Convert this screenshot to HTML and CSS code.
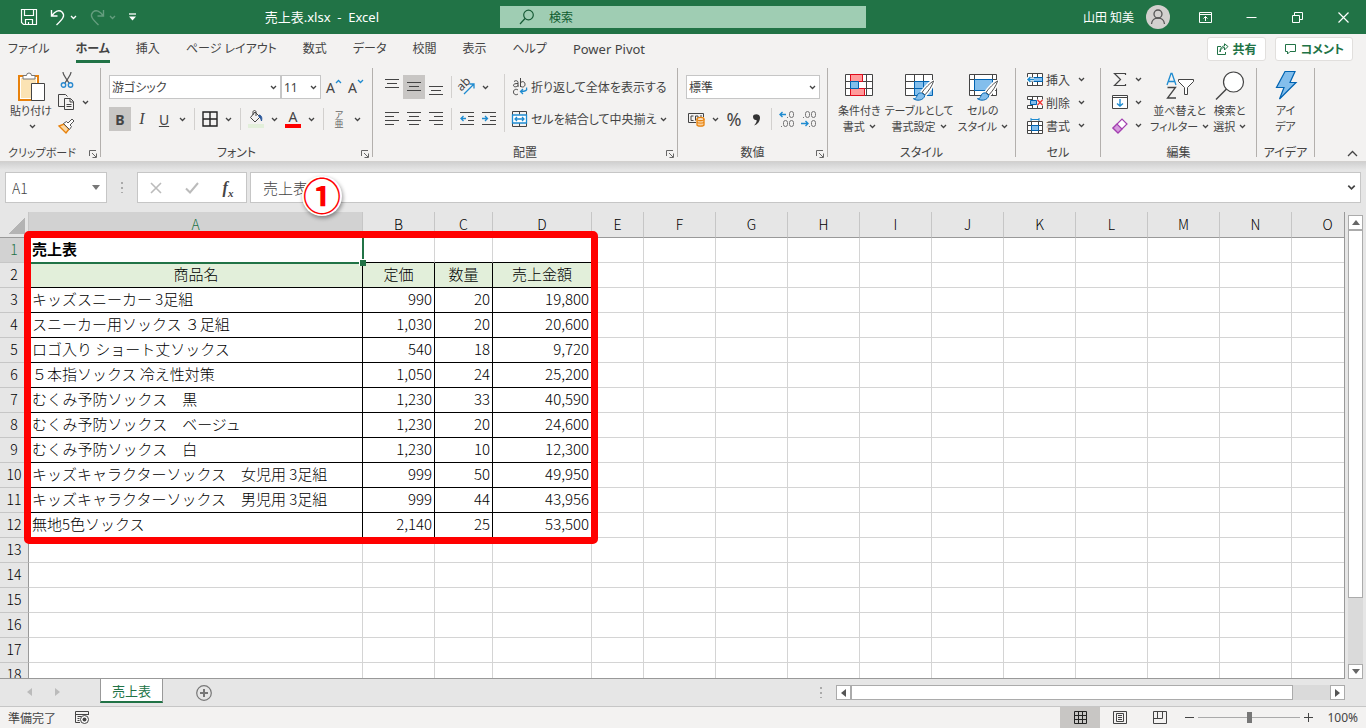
FILE: index.html
```html
<!DOCTYPE html>
<html lang="ja">
<head>
    <meta charset="UTF-8">
    <meta name="viewport" content="width=device-width, initial-scale=1.0">
    <title>売上表.xlsx - Excel</title>
    <link rel="stylesheet" href="styles.css">
</head>
<body>

    <!-- 共通アイコン -->
    <svg class="defs" width="0" height="0">
        <symbol id="chev" viewBox="0 0 7 5"><path d="M1 1l2.500 2.500L6 1" fill="none" stroke="currentColor" stroke-width="1.300"/></symbol>
        <symbol id="launcher" viewBox="0 0 8 8"><path d="M.5 6V.5H7M3 3l4 4M7.500 3.500v4h-4" fill="none" stroke="#666"/></symbol>
        <symbol id="brush" viewBox="0 0 24 24"><path d="M22.500 1c-3 1.500-9.500 8-12 12l3 2.500C17 12 21.500 5.500 22.500 1z" fill="#fff" stroke="#fff" stroke-width="4"/><path d="M22.500 1c-3 1.500-9.500 8-12 12l3 2.500C17 12 21.500 5.500 22.500 1z" fill="#fff" stroke="#444"/><path d="M10 13.500c-3-.5-4.500 1.500-5 3.500-.4 1.800-2 2.600-3.500 2.500 3 2.500 10.500 2.500 12-3.500z" fill="#83beec" stroke="#0063b1"/></symbol>
    </svg>

    <header class="titlebar">
        <div class="title-left">
            <div class="qat">
                <button aria-label="上書き保存"><svg width="18" height="18" viewBox="0 0 18 18"><path d="M1.500 1.500h15v15h-13l-2-2zM4.500 1.500v6h9v-6M5.500 16.500v-5h7v5M8.500 14v2" fill="none" stroke="#fff" stroke-width="1.200"/></svg></button>
                <button aria-label="元に戻す"><svg width="16" height="18" viewBox="0 0 16 18"><path d="M1.500 2v6h6M2 7.500C5 3 9 1.500 12 4c3.500 3.500 1 7-5.500 13" fill="none" stroke="#fff" stroke-width="1.400"/></svg><svg class="chev"><use href="#chev"/></svg></button>
                <button class="faded" aria-label="やり直し"><svg width="16" height="18" viewBox="0 0 16 18"><path d="M14.500 2v6h-6M14 7.500C11 3 7 1.500 4 4c-3.500 3.500-1 7 5.500 13" fill="none" stroke="#fff" stroke-width="1.400"/></svg><svg class="chev"><use href="#chev"/></svg></button>
                <button aria-label="カスタマイズ"><svg width="9" height="8" viewBox="0 0 9 8"><path d="M1 1h7" stroke="#fff" stroke-width="1.300"/><path d="M1 3.500h7L4.500 7.500z" fill="#fff"/></svg></button>
            </div>
            <span class="doc-title">売上表.xlsx&nbsp; -&nbsp; Excel</span>
        </div>
        <label class="search">
            <svg width="16" height="16" viewBox="0 0 16 16"><circle cx="9.500" cy="6" r="4.800" fill="none" stroke="#185c37" stroke-width="1.200"/><path d="M6 9.500L1 15" stroke="#185c37" stroke-width="1.200"/></svg>
            <input type="text" placeholder="検索" aria-label="検索">
        </label>
        <div class="title-right">
            <span class="user">山田 知美</span>
            <svg class="avatar" width="24" height="24" viewBox="0 0 24 24"><circle cx="12" cy="12" r="12" fill="#d2d0ce"/><circle cx="12" cy="9" r="4" fill="none" stroke="#555" stroke-width="1.300"/><path d="M5.500 19c.5-8 12.500-8 13 0" fill="none" stroke="#555" stroke-width="1.300"/></svg>
            <button aria-label="リボンの表示オプション"><svg width="13" height="11" viewBox="0 0 13 11"><path d="M.5.5h12v10H.5zM.5 2.500h12M6.500 9V4.500M4.500 6.500l2-2 2 2" fill="none" stroke="#fff"/></svg></button>
            <button aria-label="最小化"><svg width="11" height="11" viewBox="0 0 11 11"><path d="M.5 5.500h10" stroke="#fff"/></svg></button>
            <button aria-label="元に戻す (縮小)"><svg width="11" height="11" viewBox="0 0 11 11"><path d="M.5 3.500h7v7h-7zM2.500 3V.5h8v7H8" fill="none" stroke="#fff"/></svg></button>
            <button aria-label="閉じる"><svg width="11" height="11" viewBox="0 0 11 11"><path d="M.5.5l10 10M10.500.5l-10 10" stroke="#fff" stroke-width="1.200"/></svg></button>
        </div>
    </header>

    <nav class="tabs">
        <a href="#">ファイル</a>
        <a href="#" class="active">ホーム</a>
        <a href="#">挿入</a>
        <a href="#">ページ レイアウト</a>
        <a href="#">数式</a>
        <a href="#">データ</a>
        <a href="#">校閲</a>
        <a href="#">表示</a>
        <a href="#">ヘルプ</a>
        <a href="#" class="latin">Power Pivot</a>
        <div class="tab-actions">
            <button><svg width="13" height="13" viewBox="0 0 13 13"><path d="M5 3.500H1.500v8h8V9M4 9c.5-3 2-4.500 4.500-4.500V7L12 3.500 8.500.8V3C5.500 3 4 5.500 4 9z" fill="none" stroke="#217346"/></svg>共有</button>
            <button><svg width="13" height="13" viewBox="0 0 13 13"><path d="M1.500 1.500h10v7H6L3.500 11V8.500h-2z" fill="none" stroke="#217346"/></svg>コメント</button>
        </div>
    </nav>

    <div class="ribbon">
        <!-- クリップボード -->
        <section class="group g-clip">
            <div class="group-body">
                <button class="big">
                    <svg width="30" height="32" viewBox="0 0 30 32"><path d="M3 5h19v24H3z" fill="#fff" stroke="#e8820c" stroke-width="2"/><path d="M5 7h15v20H5z" fill="#fbe3b4"/><path d="M7 8V4.500h3.500a2.500 2.500 0 0 1 5 0H19V8z" fill="#fff" stroke="#777"/><path d="M15.500 12.500h13v17h-13z" fill="#fff" stroke="#444"/></svg>
                    貼り付け<br><svg class="chev"><use href="#chev"/></svg>
                </button>
                <div class="small-col">
                    <button class="ic" aria-label="切り取り"><svg width="14" height="16" viewBox="0 0 14 16"><path d="M3 0c0 3 3 6 6 11M11 0c0 3-3 6-6 11" fill="none" stroke="#555" stroke-width="1.200"/><circle cx="3.500" cy="13" r="2.200" fill="none" stroke="#2b8ad0" stroke-width="1.400"/><circle cx="10.500" cy="13" r="2.200" fill="none" stroke="#2b8ad0" stroke-width="1.400"/></svg></button>
                    <div class="row"><button class="ic" aria-label="コピー"><svg width="17" height="17" viewBox="0 0 17 17"><path d="M6 12.500H.5V.5h7l2 2M6.500 4.500h6l3 3v8h-9zM12 4.500V8h3.500M8.500 10.500h5M8.500 12.500h5" fill="none" stroke="#444"/></svg></button><button class="dd" aria-label="コピー メニュー"><svg class="chev"><use href="#chev"/></svg></button></div>
                    <button class="ic" aria-label="書式のコピー"><svg width="17" height="16" viewBox="0 0 17 16"><path d="M1 8l7 7 3-4-5-5z" fill="#fbd9a5" stroke="#e8820c" stroke-width="1.400"/><path d="M5.500 5.500l6 6 2-3-1.500-1.500 4-4-2-2-4 4L8.500 3.500z" fill="#fff" stroke="#555"/></svg></button>
                </div>
            </div>
            <footer>クリップボード<button class="launch" aria-label="詳細"><svg width="8" height="8"><use href="#launcher"/></svg></button></footer>
        </section>

        <!-- フォント -->
        <section class="group g-font">
            <div class="group-body two-rows">
                <div class="row">
                    <label class="combo c-font"><select aria-label="フォント"><option>游ゴシック</option></select><svg class="chev"><use href="#chev"/></svg></label>
                    <label class="combo c-size"><select aria-label="サイズ"><option>11</option></select><svg class="chev"><use href="#chev"/></svg></label>
                    <button class="ic letter" aria-label="拡大">A<svg class="chev up blue"><use href="#chev"/></svg></button>
                    <button class="ic letter" aria-label="縮小">A<svg class="chev blue"><use href="#chev"/></svg></button>
                </div>
                <div class="row">
                    <button class="ic on"><b>B</b></button>
                    <button class="ic"><i>I</i></button>
                    <button class="ic"><u>U</u></button>
                    <button class="dd" aria-label="下線"><svg class="chev"><use href="#chev"/></svg></button>
                    <span class="sep"></span>
                    <button class="ic" aria-label="罫線"><svg width="16" height="16" viewBox="0 0 16 16"><path d="M1 1h14v14H1zM8 1v14M1 8h14" fill="none" stroke="#222" stroke-width="1.400"/></svg></button>
                    <button class="dd" aria-label="罫線メニュー"><svg class="chev"><use href="#chev"/></svg></button>
                    <span class="sep"></span>
                    <button class="ic" aria-label="塗りつぶし"><svg width="16" height="18" viewBox="0 0 16 18"><path d="M7 2l5 5-5 5-4.500-4.500zM5 5V2c0-2 3-2 3 0v4" fill="none" stroke="#444"/><path d="M11 5c2 0 3.500 2 2.500 6-.5-2-1-3-2.500-4z" fill="#2b579a" stroke="#2b579a"/><path d="M0 14h16v4H0z" fill="#e2efda"/></svg></button>
                    <button class="dd" aria-label="塗りつぶしメニュー"><svg class="chev"><use href="#chev"/></svg></button>
                    <button class="ic font-color" aria-label="フォントの色">A</button>
                    <button class="dd" aria-label="フォントの色メニュー"><svg class="chev"><use href="#chev"/></svg></button>
                    <span class="sep"></span>
                    <button class="ic ruby"><span>ア</span><span>亜</span></button>
                    <button class="dd" aria-label="ふりがな"><svg class="chev"><use href="#chev"/></svg></button>
                </div>
            </div>
            <footer>フォント<button class="launch" aria-label="詳細"><svg width="8" height="8"><use href="#launcher"/></svg></button></footer>
        </section>

        <!-- 配置 -->
        <section class="group g-align">
            <div class="group-body">
                <div class="two-rows">
                    <div class="row">
                        <button class="ic" aria-label="上揃え"><svg width="14" height="16" viewBox="0 0 14 16"><path d="M0 .5h14M2 4.500h10M0 8.500h14" stroke="#444"/></svg></button>
                        <button class="ic on" aria-label="上下中央揃え"><svg width="14" height="16" viewBox="0 0 14 16"><path d="M0 3.500h14M2 7.500h10M0 11.500h14" stroke="#444"/></svg></button>
                        <button class="ic" aria-label="下揃え"><svg width="14" height="16" viewBox="0 0 14 16"><path d="M0 7.500h14M2 11.500h10M0 15.500h14" stroke="#444"/></svg></button>
                        <span class="sep"></span>
                        <button class="ic" aria-label="方向"><svg width="18" height="18" viewBox="0 0 18 18"><text x="0" y="10" font-size="12" fill="#444" transform="rotate(-45 6 8)">ab</text><path d="M6 16L16 6M11.500 6H16v4.500" fill="none" stroke="#1e8bd0" stroke-width="1.300"/></svg></button>
                        <button class="dd" aria-label="方向メニュー"><svg class="chev"><use href="#chev"/></svg></button>
                    </div>
                    <div class="row">
                        <button class="ic" aria-label="左揃え"><svg width="14" height="14" viewBox="0 0 14 14"><path d="M0 .5h14M0 4.500h9M0 8.500h14M0 12.500h9" stroke="#444"/></svg></button>
                        <button class="ic" aria-label="中央揃え"><svg width="14" height="14" viewBox="0 0 14 14"><path d="M0 .5h14M2 4.500h10M0 8.500h14M2 12.500h10" stroke="#444"/></svg></button>
                        <button class="ic" aria-label="右揃え"><svg width="14" height="14" viewBox="0 0 14 14"><path d="M0 .5h14M5 4.500h9M0 8.500h14M5 12.500h9" stroke="#444"/></svg></button>
                        <span class="sep"></span>
                        <button class="ic" aria-label="インデントを減らす"><svg width="14" height="14" viewBox="0 0 14 14"><path d="M0 .5h14M8 4.500h6M8 8.500h6M0 12.500h14" stroke="#444"/><path d="M6 6.500H1M3.500 4L1 6.500 3.500 9" fill="none" stroke="#1e8bd0" stroke-width="1.300"/></svg></button>
                        <button class="ic" aria-label="インデントを増やす"><svg width="14" height="14" viewBox="0 0 14 14"><path d="M0 .5h14M8 4.500h6M8 8.500h6M0 12.500h14" stroke="#444"/><path d="M0 6.500h5M3 4l2.500 2.500L3 9" fill="none" stroke="#1e8bd0" stroke-width="1.300"/></svg></button>
                    </div>
                </div>
                <span class="sep tall"></span>
                <div class="two-rows">
                    <button class="text-btn"><svg width="18" height="18" viewBox="0 0 18 18"><path d="M3 3.500c1.500-1.300 4-1 4 1V9M7 5.500C4 5.500 2.500 6 2.500 7.300 2.500 9.500 6 9 7 7.500M9.500 0v9M9.500 5c.8-2 4.500-2 4.500 1.300S10.500 9.500 9.500 8M7 12c-2-1.500-4.500-.5-4.500 2s2.500 3.500 4.500 2" fill="none" stroke="#444"/><path d="M15.500 9.500c1 3-1 4-6 4M12 11l-2.500 2.500L12 16" fill="none" stroke="#1e8bd0" stroke-width="1.300"/></svg>折り返して全体を表示する</button>
                    <div class="row">
                        <button class="text-btn"><svg width="18" height="16" viewBox="0 0 18 16"><path d="M1.500.5h14v15h-14zM8.500.5v3M8.500 12v3.500" fill="none" stroke="#444"/><path d="M1.500 4h14v8h-14z" fill="#fff" stroke="#1e8bd0" stroke-width="1.300"/><path d="M4 8h9M6 6L4 8l2 2M11 6l2 2-2 2" fill="none" stroke="#1e8bd0" stroke-width="1.300"/></svg>セルを結合して中央揃え</button>
                        <button class="dd" aria-label="結合メニュー"><svg class="chev"><use href="#chev"/></svg></button>
                    </div>
                </div>
            </div>
            <footer>配置<button class="launch" aria-label="詳細"><svg width="8" height="8"><use href="#launcher"/></svg></button></footer>
        </section>

        <!-- 数値 -->
        <section class="group g-num">
            <div class="group-body two-rows">
                <label class="combo"><select aria-label="表示形式"><option>標準</option></select><svg class="chev"><use href="#chev"/></svg></label>
                <div class="row">
                    <button class="ic" aria-label="通貨"><svg width="18" height="15" viewBox="0 0 18 15"><path d="M8 10.500H.5v-9h15V5" fill="none" stroke="#444"/><path d="M5.500 4H3v4.500h2.500M7.500 8.500V4H10v2M12 4h2" fill="none" stroke="#444"/><path d="M9 7v6c0 1.500 7 1.500 7 0V7" fill="#f8cf9d" stroke="#e8820c" stroke-width="1.300"/><ellipse cx="12.500" cy="7" rx="3.500" ry="1.500" fill="#fff" stroke="#e8820c" stroke-width="1.300"/><path d="M9 10c0 1.500 7 1.500 7 0" fill="none" stroke="#e8820c"/></svg></button>
                    <button class="dd" aria-label="通貨メニュー"><svg class="chev"><use href="#chev"/></svg></button>
                    <button class="ic percent">%</button>
                    <button class="ic" aria-label="桁区切り"><svg width="9" height="13" viewBox="0 0 9 13"><path d="M1 3.500C1 .5 8 0 8 4.500c0 4-2.500 7-6 8 2-2 3-4 2.500-5.500C2.500 7.500 1 6 1 3.500z" fill="#333"/></svg></button>
                    <span class="sep"></span>
                    <button class="ic" aria-label="小数点以下の表示桁数を増やす"><svg width="18" height="18" viewBox="0 0 18 18"><path d="M8 4.500H2M4.500 2L2 4.500 4.500 7" fill="none" stroke="#1e8bd0" stroke-width="1.400"/><path d="M9 7.500h1M3 16.500h1" stroke="#777"/><rect x="11.500" y="1.500" width="4" height="6" rx="2" fill="none" stroke="#777"/><rect x="5.500" y="10.500" width="4" height="6" rx="2" fill="none" stroke="#777"/><rect x="11.500" y="10.500" width="4" height="6" rx="2" fill="none" stroke="#777"/></svg></button>
                    <button class="ic" aria-label="小数点以下の表示桁数を減らす"><svg width="18" height="18" viewBox="0 0 18 18"><path d="M1 13.500h7M5.500 11L8 13.500 5.500 16" fill="none" stroke="#1e8bd0" stroke-width="1.400"/><path d="M3 7.500h1M9 16.500h1" stroke="#777"/><rect x="5.500" y="1.500" width="4" height="6" rx="2" fill="none" stroke="#777"/><rect x="11.500" y="1.500" width="4" height="6" rx="2" fill="none" stroke="#777"/><rect x="11.500" y="10.500" width="4" height="6" rx="2" fill="none" stroke="#777"/></svg></button>
                </div>
            </div>
            <footer>数値<button class="launch" aria-label="詳細"><svg width="8" height="8"><use href="#launcher"/></svg></button></footer>
        </section>

        <!-- スタイル -->
        <section class="group g-style">
            <div class="group-body">
                <button class="big">
                    <svg width="30" height="32" viewBox="0 0 30 32"><path d="M1.500 3.500h27v21h-27zM1.500 10.500h27M1.500 17.500h27M6.500 3.500v21M22.500 3.500v21M14.500 3.500v21" fill="#fff" stroke="#444"/><path d="M6.500 3.500h12v7h-12zM6.500 17.500h14v7h-14z" fill="#ff9a9a" stroke="#e00b1c"/><path d="M6.500 10.500h8v7h-8z" fill="#83beec" stroke="#0063b1"/></svg>
                    条件付き<br>書式<svg class="chev"><use href="#chev"/></svg>
                </button>
                <button class="big">
                    <svg width="30" height="32" viewBox="0 0 30 32"><path d="M1.500 3.500h27v21h-27z" fill="#fff"/><path d="M10.500 10.500h18v14h-18z" fill="#83beec"/><path d="M1.500 24.500v-21h27v7M1.500 10.500h27M1.500 17.500h27M10.500 3.500v21M19.500 3.500v21M1.500 24.500h18" fill="none" stroke="#444"/><path d="M10.500 10.500h18v14h-18zM10.500 17.500h18M19.500 10.500v14" fill="none" stroke="#0063b1"/><use href="#brush" x="8" y="9" width="23" height="23"/></svg>
                    テーブルとして<br>書式設定<svg class="chev"><use href="#chev"/></svg>
                </button>
                <button class="big">
                    <svg width="30" height="32" viewBox="0 0 30 32"><path d="M1.500 3.500h27v21h-27zM6.500 3.500v21M24.500 3.500v21M1.500 8.500h27M1.500 19.500h27" fill="#fff" stroke="#444"/><path d="M6.500 8.500h18v11h-18z" fill="#83beec" stroke="#0063b1"/><use href="#brush" x="8" y="9" width="23" height="23"/></svg>
                    セルの<br>スタイル<svg class="chev"><use href="#chev"/></svg>
                </button>
            </div>
            <footer>スタイル</footer>
        </section>

        <!-- セル -->
        <section class="group g-cell">
            <div class="group-body small-col">
                <div class="row"><button class="text-btn"><svg width="18" height="16" viewBox="0 0 18 16"><path d="M1.500 1.500h15v12h-15zM1.500 5.500h15M1.500 9.500h15M6.500 1.500v12M11.500 1.500v12" fill="#fff" stroke="#444"/><path d="M7 5.500h9.500v4H7z" fill="#83beec" stroke="#0063b1"/><path d="M8 7.500H2M4.500 5L2 7.500 4.500 10" fill="none" stroke="#fff" stroke-width="4"/><path d="M8 7.500H2M4.500 5L2 7.500 4.500 10" fill="none" stroke="#1e8bd0" stroke-width="1.500"/></svg>挿入</button><button class="dd" aria-label="挿入メニュー"><svg class="chev"><use href="#chev"/></svg></button></div>
                <div class="row"><button class="text-btn"><svg width="18" height="16" viewBox="0 0 18 16"><path d="M1.500 4.500v-3h15v3M1.500 10.500v3h15v-3M1.500 4.500H7M1.500 10.500H7M6.500 1.500v3M11.500 1.500v3M6.500 10.500v3M11.500 10.500v3" fill="#fff" stroke="#444"/><path d="M4.500 5.500h6v4h-6z" fill="#83beec" stroke="#0063b1"/><path d="M11.500 5l5 5M16.500 5l-5 5" stroke="#e33" stroke-width="1.400"/></svg>削除</button><button class="dd" aria-label="削除メニュー"><svg class="chev"><use href="#chev"/></svg></button></div>
                <div class="row"><button class="text-btn"><svg width="18" height="16" viewBox="0 0 18 16"><path d="M1.500 3.500h15v12h-15zM1.500 7.500h15M1.500 12.500h15M5.500 3.500v12M12.500 3.500v12" fill="#fff" stroke="#444"/><path d="M5.500 7.500h7v5h-7z" fill="#83beec" stroke="#0063b1"/><path d="M5 1.500h8M5 0v3M13 0v3" stroke="#1e8bd0"/></svg>書式</button><button class="dd" aria-label="書式メニュー"><svg class="chev"><use href="#chev"/></svg></button></div>
            </div>
            <footer>セル</footer>
        </section>

        <!-- 編集 -->
        <section class="group g-edit">
            <div class="group-body">
                <div class="small-col">
                    <div class="row"><button class="ic" aria-label="合計"><svg width="16" height="15" viewBox="0 0 16 15"><path d="M13.500 3V1.500h-11l6 6-6 6h11V12" fill="none" stroke="#444" stroke-width="1.200"/></svg></button><button class="dd" aria-label="合計メニュー"><svg class="chev"><use href="#chev"/></svg></button></div>
                    <div class="row"><button class="ic" aria-label="フィル"><svg width="16" height="15" viewBox="0 0 16 15"><path d="M.5.5h15v13H.5zM.5 2.500h15" fill="#fff" stroke="#444"/><path d="M8 4v7M5 8.500L8 11l3-2.500" fill="none" stroke="#1e8bd0" stroke-width="1.400"/></svg></button><button class="dd" aria-label="フィルメニュー"><svg class="chev"><use href="#chev"/></svg></button></div>
                    <div class="row"><button class="ic" aria-label="クリア"><svg width="16" height="16" viewBox="0 0 16 16"><path d="M1 10l5 5 9-9-5-5z" fill="#fff" stroke="#a33fb0" stroke-width="1.200"/><path d="M1 10l5 5 4-4-5-5z" fill="#d69ade" stroke="#a33fb0" stroke-width="1.200"/></svg></button><button class="dd" aria-label="クリアメニュー"><svg class="chev"><use href="#chev"/></svg></button></div>
                </div>
                <button class="big">
                    <svg width="30" height="32" viewBox="0 0 30 32"><path d="M2 14L6 2.500h1L11 14M3.500 10.500h6" fill="none" stroke="#1e8bd0" stroke-width="1.300"/><path d="M2.500 16.500h8l-8 10.500h8.500" fill="none" stroke="#444" stroke-width="1.300"/><path d="M13.500 8.500h15v2l-6 6v7h-3v-7l-6-6z" fill="#fff" stroke="#444"/></svg>
                    並べ替えと<br>フィルター<svg class="chev"><use href="#chev"/></svg>
                </button>
                <button class="big">
                    <svg width="30" height="32" viewBox="0 0 30 32"><circle cx="18.500" cy="11" r="10" fill="#fff" stroke="#444" stroke-width="1.200"/><path d="M11.500 18L1 28.500" stroke="#444" stroke-width="1.400"/></svg>
                    検索と<br>選択<svg class="chev"><use href="#chev"/></svg>
                </button>
            </div>
            <footer>編集</footer>
        </section>

        <!-- アイデア -->
        <section class="group g-idea">
            <div class="group-body">
                <button class="big">
                    <svg width="30" height="32" viewBox="0 0 30 32"><path d="M14 .5h10L19 11.500h6L8.500 28l4.500-11.500H5.500z" fill="#83beec" stroke="#0063b1" stroke-width="1.200"/></svg>
                    アイ<br>デア
                </button>
            </div>
            <footer>アイデア</footer>
        </section>

        <button class="collapse" aria-label="リボンを折りたたむ"><svg width="11" height="7" viewBox="0 0 11 7"><path d="M1 6l4.500-4.500L10 6" fill="none" stroke="#444" stroke-width="1.300"/></svg></button>
    </div>

    <div class="formula-bar">
        <label class="name-box"><input type="text" value="A1" aria-label="名前ボックス"><svg width="8" height="5" viewBox="0 0 8 5"><path d="M0 0h8L4 5z" fill="#777"/></svg></label>
        <span class="grip"></span>
        <div class="fx">
            <button aria-label="キャンセル"><svg width="12" height="12" viewBox="0 0 12 12"><path d="M1 1l10 10M11 1L1 11" stroke="#bbb" stroke-width="1.600"/></svg></button>
            <button aria-label="入力"><svg width="14" height="12" viewBox="0 0 14 12"><path d="M1 6.500l4 4L13 1" fill="none" stroke="#bbb" stroke-width="2"/></svg></button>
            <button class="fx-btn"><i>f<sub>x</sub></i></button>
        </div>
        <label class="formula"><input type="text" value="売上表" aria-label="数式バー"><svg width="9" height="7" viewBox="0 0 7 5"><use href="#chev"/></svg></label>
        <span class="step-mark">①</span>
    </div>

    <main class="work">
        <div class="sheet">
            <table>
                <colgroup>
                    <col class="c-head"><col class="c-a"><col class="c-b"><col class="c-c"><col class="c-d"><col class="c-e">
                    <col><col><col><col><col><col><col><col><col><col>
                </colgroup>
                <thead>
                    <tr><th class="corner"></th><th class="sel">A</th><th>B</th><th>C</th><th>D</th><th>E</th><th>F</th><th>G</th><th>H</th><th>I</th><th>J</th><th>K</th><th>L</th><th>M</th><th>N</th><th>O</th></tr>
                </thead>
                <tbody id="rows">
                    <tr class="title-row"><th class="sel">1</th><td class="cursor">売上表</td><td></td><td></td><td></td></tr>
                    <tr class="data names"><th>2</th><td>商品名</td><td>定価</td><td>数量</td><td>売上金額</td></tr>
                    <tr class="data"><th>3</th><td>キッズスニーカー 3足組</td><td>990</td><td>20</td><td>19,800</td></tr>
                    <tr class="data"><th>4</th><td>スニーカー用ソックス ３足組</td><td>1,030</td><td>20</td><td>20,600</td></tr>
                    <tr class="data"><th>5</th><td>ロゴ入り ショート丈ソックス</td><td>540</td><td>18</td><td>9,720</td></tr>
                    <tr class="data"><th>6</th><td>５本指ソックス 冷え性対策</td><td>1,050</td><td>24</td><td>25,200</td></tr>
                    <tr class="data"><th>7</th><td>むくみ予防ソックス　黒</td><td>1,230</td><td>33</td><td>40,590</td></tr>
                    <tr class="data"><th>8</th><td>むくみ予防ソックス　ベージュ</td><td>1,230</td><td>20</td><td>24,600</td></tr>
                    <tr class="data"><th>9</th><td>むくみ予防ソックス　白</td><td>1,230</td><td>10</td><td>12,300</td></tr>
                    <tr class="data"><th>10</th><td>キッズキャラクターソックス　女児用 3足組</td><td>999</td><td>50</td><td>49,950</td></tr>
                    <tr class="data"><th>11</th><td>キッズキャラクターソックス　男児用 3足組</td><td>999</td><td>44</td><td>43,956</td></tr>
                    <tr class="data"><th>12</th><td>無地5色ソックス</td><td>2,140</td><td>25</td><td>53,500</td></tr>
                </tbody>
            </table>
            <div class="red-frame"></div>
        </div>
        <div class="vscroll">
            <button aria-label="上へ"><svg width="8" height="5" viewBox="0 0 8 5"><path d="M0 5h8L4 0z" fill="#666"/></svg></button>
            <div class="thumb"></div>
            <div class="track"></div>
            <button aria-label="下へ"><svg width="8" height="5" viewBox="0 0 8 5"><path d="M0 0h8L4 5z" fill="#666"/></svg></button>
        </div>
    </main>

    <div class="sheet-bar">
        <div class="sheet-nav">
            <button aria-label="前のシート"><svg width="5" height="8" viewBox="0 0 5 8"><path d="M5 0v8L0 4z" fill="#bbb"/></svg></button>
            <button aria-label="次のシート"><svg width="5" height="8" viewBox="0 0 5 8"><path d="M0 0v8l5-4z" fill="#bbb"/></svg></button>
        </div>
        <a href="#" class="sheet-tab">売上表</a>
        <button class="add-sheet" aria-label="新しいシート"><svg width="16" height="16" viewBox="0 0 16 16"><circle cx="8" cy="8" r="7.300" fill="none" stroke="#777" stroke-width="1.200"/><path d="M8 4v8M4 8h8" stroke="#777" stroke-width="2"/></svg></button>
        <span class="grip"></span>
        <div class="hscroll">
            <button aria-label="左へ"><svg width="5" height="8" viewBox="0 0 5 8"><path d="M5 0v8L0 4z" fill="#555"/></svg></button>
            <div class="thumb"></div>
            <div class="track"></div>
            <button aria-label="右へ"><svg width="5" height="8" viewBox="0 0 5 8"><path d="M0 0v8l5-4z" fill="#555"/></svg></button>
        </div>
    </div>

    <footer class="status">
        <span>準備完了</span>
        <button class="macro" aria-label="マクロの記録"><svg width="15" height="13" viewBox="0 0 15 13"><path d="M5 11.500H.5V.5h13V4M.5 3.500h13M2.500 5.500h4M2.500 7.500h2M2.500 9.500h2" fill="none" stroke="#444"/><circle cx="9.500" cy="8.500" r="4" fill="#fff" stroke="#444"/><circle cx="9.500" cy="8.500" r="2" fill="#444"/></svg></button>
        <div class="views">
            <button class="on" aria-label="標準"><svg width="13" height="13" viewBox="0 0 13 13"><path d="M.5.5h12v12H.5zM.5 4.500h12M.5 8.500h12M4.500.5v12M8.500.5v12" fill="none" stroke="#222"/></svg></button>
            <button aria-label="ページ レイアウト"><svg width="14" height="13" viewBox="0 0 14 13"><path d="M.5.5h13v12H.5zM3.500 2.500h7v8h-7zM5 4.500h4M5 6.500h4M5 8.500h4" fill="none" stroke="#444"/></svg></button>
            <button aria-label="改ページ プレビュー"><svg width="14" height="13" viewBox="0 0 14 13"><path d="M.5.5h13v12H.5zM4.500.5v7M9.500.5v7M.5 7.500h9" fill="none" stroke="#444"/></svg></button>
        </div>
        <div class="zoom">
            <button aria-label="縮小"><svg width="9" height="9" viewBox="0 0 9 9"><path d="M0 4.500h9" stroke="#444"/></svg></button>
            <input type="range" min="0" max="100" value="50" aria-label="ズーム">
            <button aria-label="拡大"><svg width="9" height="9" viewBox="0 0 9 9"><path d="M0 4.500h9M4.500 0v9" stroke="#444"/></svg></button>
            <span>100%</span>
        </div>
    </footer>

    <script>
        // 空白セルと13行目以降を追加する
        const body = document.getElementById('rows');
        for (let n = 13; n <= 18; n++) {
            const tr = body.insertRow();
            const th = document.createElement('th');
            th.textContent = n;
            tr.appendChild(th);
        }
        for (const tr of body.rows) {
            while (tr.cells.length < 16) tr.insertCell();
        }
    </script>

</body>
</html>
```
FILE: styles.css
```css
* {
    box-sizing: border-box;
}

body {
    margin: 0;
    height: 100vh;
    display: flex;
    flex-direction: column;
    overflow: hidden;
    font-family: 'Noto Sans', 'Noto Sans CJK JP', sans-serif;
    font-size: 12px;
    color: #444;
    background-color: #e6e6e6;
    font-feature-settings: "palt";
}

button, input, select {
    font: inherit;
    font-feature-settings: inherit;
    color: inherit;
    margin: 0;
    padding: 0;
    border: none;
    background: none;
}

button {
    display: flex;
    align-items: center;
    justify-content: center;
    flex-shrink: 0;
    white-space: nowrap;
}

a {
    color: inherit;
    text-decoration: none;
}

svg {
    flex-shrink: 0;
    overflow: visible;
}

.defs {
    position: absolute;
}

.chev {
    width: 7px;
    height: 5px;
}

/* タイトルバー */
.titlebar {
    display: grid;
    grid-template-columns: 1fr 366px 1fr;
    align-items: center;
    height: 34px;
    flex-shrink: 0;
    background-color: #217346;
    color: #fff;
}

.title-left {
    display: flex;
    justify-content: space-between;
    align-items: center;
    padding: 0 121px 0 20px;
}

.doc-title {
    font-size: 13px;
    line-height: 16px;
}

.qat {
    display: flex;
    gap: 12px;
}

.qat button {
    gap: 4px;
}

.qat .faded {
    opacity: 0.3;
}

.search {
    display: flex;
    align-items: center;
    gap: 14px;
    height: 22px;
    padding-left: 19px;
    background-color: #9fcdb3;
}

.search input {
    flex: 1;
    outline: none;
}

.search input::placeholder {
    color: #0e5c2f;
    opacity: 1;
}

.title-right {
    display: flex;
    justify-content: flex-end;
    align-items: center;
}

.title-right button {
    width: 46px;
    height: 34px;
}

.avatar {
    margin: 0 12px;
}

/* タブ */
.tabs {
    display: flex;
    align-items: center;
    gap: 26px;
    height: 30px;
    flex-shrink: 0;
    padding: 0 13px 0 8px;
    background-color: #f3f2f1;
}

.tabs a {
    height: 28px;
    line-height: 28px;
    white-space: nowrap;
}

.tabs .active {
    font-weight: bold;
    border-bottom: 3px solid #217346;
}

.tabs .latin {
    font-size: 13px;
}

.tab-actions {
    display: flex;
    gap: 9px;
    margin-left: auto;
}

.tab-actions button {
    gap: 4px;
    height: 24px;
    padding: 0 8px;
    background-color: #fff;
    border: 1px solid #e1dfdd;
    border-radius: 3px;
    color: #217346;
    font-weight: bold;
}

/* リボン */
.ribbon {
    display: flex;
    height: 98px;
    flex-shrink: 0;
    padding: 4px 0;
    background-color: #f3f2f1;
    border-bottom: 1px solid #d2d0ce;
}

.group {
    display: flex;
    flex-direction: column;
    flex-shrink: 0;
    border-right: 1px solid #b3b0ad;
}

.group-body {
    display: flex;
    flex: 1;
}

.group footer {
    position: relative;
    height: 16px;
    line-height: 16px;
    margin-bottom: -4px;
    text-align: center;
}

.launch {
    position: absolute;
    right: 3px;
    bottom: 3px;
}

.g-clip { width: 101px; }
.g-clip footer {
    padding-right: 16px;
    font-size: 11px;
}
.g-clip .group-body { padding-left: 10px; gap: 4px; }
.g-font { width: 272px; }
.g-align { width: 305px; }
.g-num { width: 150px; }
.g-style { width: 188px; }
.g-style .group-body { padding-left: 10px; gap: 4px; }
.g-cell { width: 85px; }
.g-edit { width: 156px; }
.g-edit .group-body { padding-left: 8px; gap: 4px; }
.g-idea { width: 58px; }
.g-idea .group-body { justify-content: center; }

.g-font .group-body,
.g-align .group-body,
.g-num .group-body,
.g-cell .group-body {
    padding-left: 8px;
}

.two-rows {
    display: flex;
    flex-direction: column;
    gap: 8px;
    padding-top: 7px;
}

.small-col {
    display: flex;
    flex-direction: column;
}

.small-col .ic,
.small-col .text-btn {
    height: 23px;
}

.row {
    display: flex;
    align-items: center;
}

.ic {
    width: 22px;
    height: 24px;
    font-size: 14px;
}

.on {
    background-color: #c8c6c4;
}

.dd {
    width: 15px;
    height: 24px;
}

.small-col .dd {
    height: 23px;
}

.sep {
    width: 1px;
    height: 22px;
    margin: 0 4px;
    background-color: #d2d0ce;
}

.sep.tall {
    height: 58px;
    margin-top: 6px;
}

.text-btn {
    height: 24px;
    gap: 2px;
}

.g-align .text-btn {
    justify-content: flex-start;
    padding-left: 2px;
}

.g-cell .text-btn {
    padding-left: 2px;
}

.g-cell .dd {
    margin-left: 4px;
}

.big {
    display: block;
    padding-top: 3px;
    font-size: 11px;
    line-height: 16px;
    text-align: center;
    align-self: flex-start;
}

.big svg:first-child {
    display: block;
    margin: 0 auto;
}

.big .chev {
    margin: 0 0 2px 4px;
}

.combo {
    position: relative;
    display: flex;
    height: 24px;
    border: 1px solid #c6c6c6;
    background-color: #fff;
}

.combo select {
    appearance: none;
    width: 100%;
    padding-left: 2px;
    outline: none;
}

.combo .chev {
    position: absolute;
    right: 3px;
    top: 9px;
    pointer-events: none;
}

.c-font { width: 172px; }

.c-size {
    width: 40px;
    margin-right: 2px;
}

.g-num .combo { width: 134px; }

.letter .chev {
    margin-bottom: 12px;
}

.up {
    transform: scaleY(-1);
}

.letter .blue {
    color: #1e8bd0;
}

.ic i {
    font-family: 'Liberation Serif', serif;
    font-size: 16px;
}

.font-color {
    height: 18px;
    width: 16px;
    margin: 0 3px;
    line-height: 14px;
    align-items: flex-start;
    border-bottom: 4px solid #f00;
}

.ruby {
    flex-direction: column;
    font-size: 9px;
    line-height: 9px;
    color: #666;
}

.percent {
    font-size: 18px;
}

.collapse {
    margin: auto 8px 0 auto;
}

/* 数式バー */
.formula-bar {
    position: relative;
    display: flex;
    height: 50px;
    flex-shrink: 0;
    padding: 10px 5px 9px;
    background: linear-gradient(#d0d0d0, #e6e6e6 8px);
}

.name-box, .fx, .formula {
    display: flex;
    align-items: center;
    background-color: #fff;
    border: 1px solid #c6c6c6;
}

.name-box {
    width: 102px;
    padding: 0 6px;
    font-family: 'Noto Sans CJK JP', sans-serif;
    font-size: 14px;
    font-weight: 300;
}

.name-box input {
    flex: 1;
    min-width: 0;
}

.grip {
    width: 2px;
    height: 11px;
    align-self: center;
    margin: 0 14px;
    background: repeating-linear-gradient(#aaa 0 2px, transparent 2px 5px);
}

.fx {
    width: 110px;
    margin-right: 3px;
}

.fx button {
    flex: 1;
}

.fx-btn {
    font-family: 'Liberation Serif', serif;
    font-size: 16px;
    font-weight: bold;
}

.fx-btn sub {
    font-size: 11px;
    line-height: 0;
}

.formula {
    flex: 1;
    padding: 0 4px 0 12px;
    font-family: 'Noto Sans CJK JP', sans-serif;
    font-feature-settings: normal;
    font-size: 15px;
    font-weight: 300;
}

.formula input {
    flex: 1;
}

/* 手順の番号 */
.step-mark {
    position: absolute;
    z-index: 2;
    left: 302px;
    top: 14px;
    width: 40px;
    height: 40px;
    line-height: 36px;
    border-radius: 50%;
    background-color: #fff;
    box-shadow: 1px 2px 4px rgba(0, 0, 0, 0.4);
    color: #f00;
    font-family: 'Noto Sans CJK JP', sans-serif;
    font-size: 38px;
    font-weight: bold;
    text-align: center;
}

/* シート */
.work {
    display: flex;
    flex: 1;
    min-height: 0;
}

.sheet {
    position: relative;
    flex: 1;
    overflow: hidden;
    background-color: #fff;
    border-right: 1px solid #999;
    border-bottom: 1px solid #999;
    font-family: 'Noto Sans CJK JP', sans-serif;
    font-feature-settings: normal;
    font-size: 15px;
    font-weight: 300;
    color: #000;
}

table {
    table-layout: fixed;
    width: 1364px;
    border-collapse: separate;
    border-spacing: 0;
}

.c-head { width: 29px; }
.c-a { width: 334px; }
.c-b { width: 72px; }
.c-c { width: 58px; }
.c-d { width: 99px; }
.c-e { width: 52px; }

th, td {
    height: 25px;
    padding: 0 2px 2px;
    line-height: 22px;
    white-space: nowrap;
    border-right: 1px solid #d4d4d4;
    border-bottom: 1px solid #d4d4d4;
}

th {
    padding: 0 0 2px;
    background-color: #e6e6e6;
    font-size: 14px;
    font-weight: inherit;
    border-color: #c6c6c6;
}

thead th {
    height: 26px;
    border-bottom-color: #999;
}

tbody th {
    border-right-color: #999;
}

td {
    background-color: #fff;
}

th.sel {
    background-color: #d2d2d2;
    color: #217346;
}

.corner {
    background: linear-gradient(135deg, transparent 50%, #b4b4b4 50%) 8px 5px / 17px 17px no-repeat #e6e6e6;
}

.title-row td:nth-child(-n+5) {
    border-bottom-color: #000;
}

.data td:nth-child(-n+5) {
    border-color: #000;
    text-align: right;
}

.data td:nth-child(2) {
    padding-left: 3px;
    text-align: left;
}

.names td:nth-child(-n+5) {
    background-color: #e2efda;
    text-align: center;
}

.cursor {
    position: relative;
    padding-left: 3px;
    font-weight: bold;
}

/* アクティブセルの枠 */
.cursor::before {
    content: '';
    position: absolute;
    inset: -2px;
    border: 2px solid #217346;
}

.cursor::after {
    content: '';
    position: absolute;
    right: -4px;
    bottom: -4px;
    width: 6px;
    height: 6px;
    background-color: #217346;
    border: solid #fff;
    border-width: 1px 0 0 1px;
}

.red-frame {
    position: absolute;
    left: 24px;
    top: 19px;
    width: 574px;
    height: 313px;
    border: 7px solid #f00;
    border-radius: 5px;
}

.vscroll {
    display: flex;
    flex-direction: column;
    width: 15px;
    margin: 3px 3px 0;
}

.vscroll button, .hscroll button, .thumb {
    background-color: #fff;
    border: 1px solid #ababab;
}

.vscroll button {
    height: 15px;
}

.thumb {
    flex: 11;
}

.track {
    flex: 2;
    background-color: #dadada;
}

/* シート見出し */
.sheet-bar {
    display: flex;
    height: 27px;
    flex-shrink: 0;
    padding-right: 21px;
}

.sheet-nav {
    display: flex;
    gap: 23px;
    width: 100px;
    padding: 0 0 2px 27px;
}

.sheet-tab {
    height: 24px;
    padding: 0 11px;
    line-height: 24px;
    font-size: 13px;
    background-color: #fff;
    color: #217346;
    border: solid #999;
    border-width: 0 1px;
    border-bottom: 2px solid #217346;
}

.add-sheet {
    margin: 0 auto 0 33px;
}

.hscroll {
    display: flex;
    width: 509px;
    height: 15px;
    margin-top: 6px;
}

.hscroll button {
    width: 15px;
}

.hscroll .thumb {
    flex: 12;
}

.hscroll .track {
    flex: 1;
}

/* ステータスバー */
.status {
    display: flex;
    align-items: center;
    height: 22px;
    flex-shrink: 0;
    padding: 0 8px;
    background-color: #f3f2f1;
    border-top: 1px solid #c6c6c6;
}

.macro {
    margin-left: 19px;
}

.views {
    display: flex;
    margin-left: auto;
}

.views button {
    width: 40px;
    height: 21px;
}

.zoom {
    display: flex;
    align-items: center;
    gap: 4px;
    margin-left: 5px;
}

.zoom span {
    margin-left: 10px;
}

.zoom input {
    appearance: none;
    width: 102px;
    height: 1px;
    background-color: #aaa;
}

.zoom input::-webkit-slider-thumb {
    appearance: none;
    width: 5px;
    height: 11px;
    background-color: #777;
}
```
